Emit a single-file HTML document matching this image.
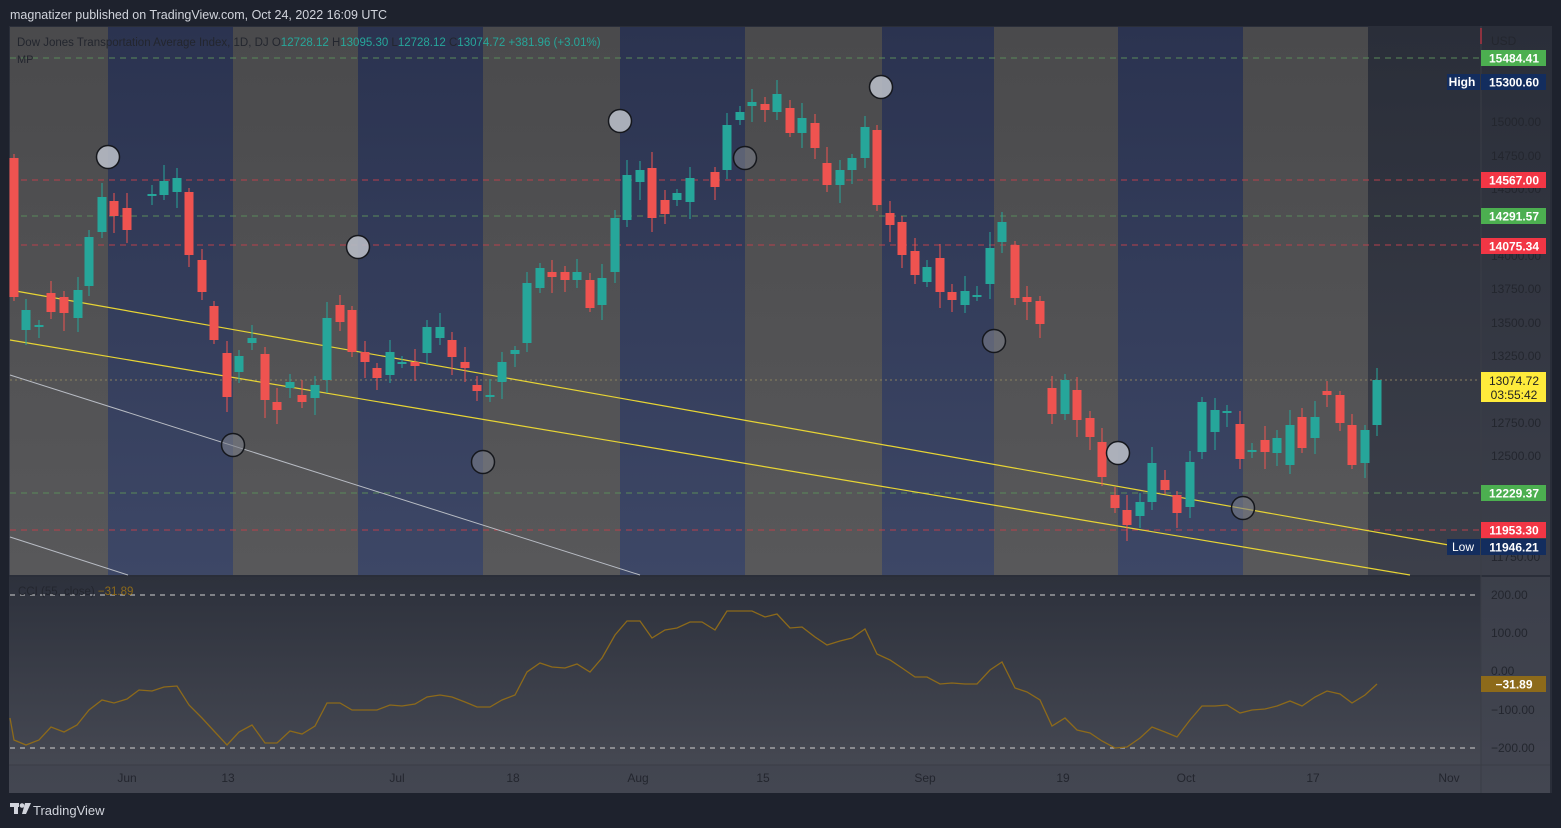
<!DOCTYPE html>
<html><head><meta charset="utf-8"><style>
html,body{margin:0;padding:0;background:#1e222d;width:1561px;height:828px;overflow:hidden;font-family:"Liberation Sans",sans-serif}
svg{position:absolute;left:0;top:0}
</style></head><body>
<svg id="s" width="1561" height="828" xmlns="http://www.w3.org/2000/svg" font-family="Liberation Sans, sans-serif">
<defs>
<linearGradient id="bg" x1="0" y1="0" x2="0" y2="1"><stop offset="0" stop-color="#2a2e39"/><stop offset="1" stop-color="#434651"/></linearGradient>
<linearGradient id="gr" x1="0" y1="0" x2="0" y2="1"><stop offset="0" stop-color="#4a4a4c"/><stop offset="1" stop-color="#58585a"/></linearGradient>
<linearGradient id="bl" x1="0" y1="0" x2="0" y2="1"><stop offset="0" stop-color="#2b3350"/><stop offset="1" stop-color="#3d4766"/></linearGradient>
<linearGradient id="bg2" x1="0" y1="0" x2="0" y2="1"><stop offset="0" stop-color="#2d313c"/><stop offset="1" stop-color="#454852"/></linearGradient>
</defs>
<text x="10" y="19" fill="#d1d4dc" font-size="12.5">magnatizer published on TradingView.com, Oct 24, 2022 16:09 UTC</text>
<rect x="9" y="26" width="1543" height="767" fill="url(#bg)"/>
<rect x="9" y="577" width="1472" height="188" fill="url(#bg2)"/>
<rect x="9" y="575" width="1543" height="2" fill="#2a2e39"/>
<rect x="1550" y="26" width="2" height="767" fill="#2a2e39"/>
<g id="stripes"></g>
<g id="lines">
<line x1="10" y1="58" x2="1480" y2="58" stroke="#5a8a5a" stroke-dasharray="6,5"/>
<line x1="10" y1="180" x2="1480" y2="180" stroke="#b8404c" stroke-dasharray="6,5"/>
<line x1="10" y1="216" x2="1480" y2="216" stroke="#5a8a5a" stroke-dasharray="6,5"/>
<line x1="10" y1="245" x2="1480" y2="245" stroke="#b8404c" stroke-dasharray="6,5"/>
<line x1="10" y1="493" x2="1480" y2="493" stroke="#5a8a5a" stroke-dasharray="6,5"/>
<line x1="10" y1="530" x2="1480" y2="530" stroke="#b8404c" stroke-dasharray="6,5"/>
<line x1="10" y1="380" x2="1480" y2="380" stroke="#8a8060" stroke-dasharray="2,3"/>
<line x1="10" y1="375" x2="640" y2="575" stroke="#b8bcc4" stroke-width="1"/>
<line x1="10" y1="537" x2="128" y2="575" stroke="#b8bcc4" stroke-width="1"/>
<line x1="10" y1="290" x2="1460" y2="547" stroke="#e8d534" stroke-width="1.2"/>
<line x1="10" y1="340" x2="1410" y2="575" stroke="#e8d534" stroke-width="1.2"/>
</g>
<g id="candles"></g>
<g id="circ"></g>
<text x="17" y="46" fill="#23262e" font-size="11.5">Dow Jones Transportation Average Index, 1D, DJ  O<tspan fill="#26a69a">12728.12</tspan>  H<tspan fill="#26a69a">13095.30</tspan>  L<tspan fill="#26a69a">12728.12</tspan>  C<tspan fill="#26a69a">13074.72  +381.96 (+3.01%)</tspan></text>
<text x="17" y="63" fill="#23262e" font-size="11">MP</text>
<!-- CCI -->
<line x1="10" y1="595" x2="1480" y2="595" stroke="#d0d0d0" stroke-dasharray="5,5"/>
<line x1="10" y1="748" x2="1480" y2="748" stroke="#d0d0d0" stroke-dasharray="5,5"/>
<polyline id="cci" fill="none" stroke="#8d6a1a" stroke-width="1.3"/>
<text x="18" y="595" fill="#23262e" font-size="11.5">CCI (55, close)  <tspan fill="#8d6a1a">−31.89</tspan></text>
<line x1="1481" y1="26" x2="1481" y2="793" stroke="#3a3d46"/>
<line x1="9" y1="765" x2="1550" y2="765" stroke="#3a3d46"/>
<g id="axis" font-size="12" fill="#23262e"></g>
<g id="lbl"></g>
<rect x="0" y="793" width="1561" height="35" fill="#1e222d"/>
<g fill="#d1d4dc"><rect x="10" y="803" width="9" height="4"/><rect x="14" y="803" width="4" height="11"/><circle cx="22" cy="805.5" r="2.3"/><path d="M25 803h6l-5 11h-4z"/></g>
<text x="33" y="815" fill="#d1d4dc" font-size="13">TradingView</text>
</svg>
<script>
const NS="http://www.w3.org/2000/svg",S=document.getElementById('s');
function el(p,t,a,txt){const e=document.createElementNS(NS,t);for(const k in a)e.setAttribute(k,a[k]);if(txt!==undefined)e.textContent=txt;document.getElementById(p).appendChild(e);return e}
const st=[[10,108,'gr'],[108,233,'bl'],[233,358,'gr'],[358,483,'bl'],[483,620,'gr'],[620,745,'bl'],[745,882,'gr'],[882,994,'bl'],[994,1118,'gr'],[1118,1243,'bl'],[1243,1368,'gr']];
st.forEach(s=>el('stripes','rect',{x:s[0],y:27,width:s[1]-s[0],height:548,fill:'url(#'+s[2]+')'}));
// x, open, close
const c=[[14,158,297],[26,330,310],[39,327,325],[51,293,312],[64,297,313],[78,318,290],[89,286,237],[102,232,197],[114,201,216],[127,208,230],[152,196,194],[164,195,181],[177,192,178],[189,192,255],[202,260,292],[214,306,340],[227,353,397],[239,372,356],[252,343,338],[265,354,400],[277,402,410],[290,388,382],[302,395,402],[315,398,385],[327,380,318],[340,305,322],[352,310,352],[365,352,362],[377,368,378],[390,375,352],[402,364,362],[415,362,366],[427,353,327],[440,338,327],[452,340,357],[465,362,368],[477,385,391],[490,396,395],[502,382,362],[515,354,350],[527,343,283],[540,288,268],[552,272,277],[565,272,280],[577,280,272],[590,280,308],[602,305,278],[615,272,218],[627,220,175],[640,182,170],[652,168,218],[665,200,214],[677,200,193],[690,202,178],[715,172,187],[727,170,125],[740,120,112],[752,106,102],[765,104,110],[777,112,94],[790,108,133],[802,133,118],[815,123,148],[827,163,185],[840,185,170],[852,170,158],[865,158,127],[877,130,205],[890,213,225],[902,222,255],[915,251,275],[927,282,267],[940,258,292],[952,292,300],[965,305,291],[977,297,295],[990,284,248],[1002,242,222],[1015,245,298],[1027,297,302],[1040,301,324],[1052,388,414],[1065,414,380],[1077,390,420],[1090,418,437],[1102,442,477],[1115,495,508],[1127,510,525],[1140,516,502],[1152,502,463],[1165,480,490],[1177,495,513],[1190,507,462],[1202,452,402],[1215,432,410],[1227,413,411],[1240,424,459],[1252,452,450],[1265,440,452],[1277,453,438],[1290,465,425],[1302,417,448],[1315,438,417],[1327,391,395],[1340,395,423],[1352,425,465],[1365,463,430],[1377,425,380]];
c.forEach(([x,o,cl],i)=>{const g=cl<o,col=g?'#26a69a':'#ef5350';const t=Math.min(o,cl),b=Math.max(o,cl);const h=(i*7)%13+4,l=(i*11)%15+4;
el('candles','line',{x1:x,y1:t-h,x2:x,y2:b+l,stroke:col,'stroke-width':1});
el('candles','rect',{x:x-4.5,y:t,width:9,height:Math.max(2,b-t),fill:col});});
[[108,157,1],[358,247,1],[620,121,1],[745,158,0],[881,87,1],[233,445,0],[483,462,0],[994,341,0],[1118,453,1],[1243,508,0]].forEach(p=>el('circ','circle',{cx:p[0],cy:p[1],r:11.5,fill:p[2]?'#b4b8c2':'#7c7f88','fill-opacity':p[2]?0.92:0.6,stroke:'#15171c','stroke-width':1.5}));
const cc=[[10,718],[14,740],[26,745],[39,740],[51,727],[64,732],[77,725],[89,710],[102,700],[114,703],[127,699],[139,690],[152,691],[164,687],[177,686],[189,705],[202,718],[214,731],[227,745],[239,732],[252,725],[265,743],[277,743],[290,731],[302,734],[315,726],[327,703],[340,703],[352,710],[365,710],[377,710],[390,705],[402,706],[415,704],[427,697],[440,695],[452,697],[465,702],[477,707],[490,707],[502,700],[515,695],[527,672],[540,663],[552,667],[565,668],[577,664],[590,672],[602,658],[615,635],[627,621],[640,621],[652,638],[665,630],[677,628],[690,622],[702,622],[715,630],[727,611],[740,611],[752,611],[765,617],[777,614],[790,628],[802,627],[815,637],[827,645],[840,641],[852,638],[865,629],[877,654],[890,660],[902,668],[915,677],[927,677],[940,684],[952,683],[965,684],[977,684],[990,670],[1002,662],[1015,688],[1027,692],[1040,700],[1052,726],[1065,718],[1077,730],[1090,733],[1102,741],[1115,748],[1127,747],[1140,738],[1152,727],[1165,732],[1177,737],[1190,720],[1202,706],[1215,706],[1227,705],[1240,713],[1252,710],[1265,709],[1277,706],[1290,701],[1302,706],[1315,697],[1327,691],[1340,694],[1352,703],[1365,695],[1377,684]];
document.getElementById('cci').setAttribute('points',cc.map(p=>p.join(',')).join(' '));
[['USD',45],['15000.00',126],['14750.00',160],['14500.00',193],['14000.00',260],['13750.00',293],['13500.00',327],['13250.00',360],['12750.00',427],['12500.00',460],['12000.00',497],['11750.00',561],['200.00',599],['100.00',637],['0.00',675],['−100.00',714],['−200.00',752]].forEach(a=>el('axis','text',{x:1491,y:a[1]},a[0]));
[['Jun',127],['13',228],['Jul',397],['18',513],['Aug',638],['15',763],['Sep',925],['19',1063],['Oct',1186],['17',1313],['Nov',1449]].forEach(a=>el('axis','text',{x:a[1],y:782,'text-anchor':'middle'},a[0]));
function lab(y,txt,bg,fg,h){el('lbl','rect',{x:1481,y:y-(h||16)/2,width:65,height:h||16,fill:bg});el('lbl','text',{x:1514,y:y+4.5,'text-anchor':'middle',fill:fg||'#fff','font-size':12,'font-weight':'bold'},txt);}
lab(58,'15484.41','#4caf50');lab(82,'15300.60','#132d5e');lab(180,'14567.00','#f23645');lab(216,'14291.57','#4caf50');lab(246,'14075.34','#f23645');lab(493,'12229.37','#4caf50');lab(530,'11953.30','#f23645');lab(547,'11946.21','#132d5e');lab(684,'−31.89','#8d6a1a');
el('lbl','rect',{x:1481,y:372,width:65,height:30,fill:'#ffeb3b'});
el('lbl','text',{x:1514,y:385,'text-anchor':'middle',fill:'#222','font-size':12},'13074.72');
el('lbl','text',{x:1514,y:399,'text-anchor':'middle',fill:'#222','font-size':12},'03:55:42');
el('lbl','rect',{x:1447,y:74,width:33,height:16,fill:'#132d5e'});el('lbl','text',{x:1462,y:86,'text-anchor':'middle',fill:'#fff','font-size':12,'font-weight':'bold'},'High');
el('lbl','rect',{x:1447,y:539,width:33,height:16,fill:'#132d5e'});el('lbl','text',{x:1463,y:551,'text-anchor':'middle',fill:'#fff','font-size':12},'Low');
el('lbl','line',{x1:1481,y1:28,x2:1481,y2:44,stroke:'#f23645'});
</script>
</body></html>
